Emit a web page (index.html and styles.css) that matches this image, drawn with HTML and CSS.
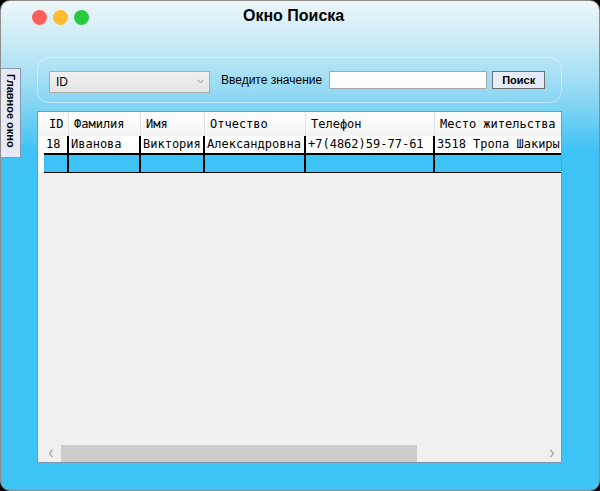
FILE: index.html
```html
<!DOCTYPE html>
<html lang="ru">
<head>
<meta charset="utf-8">
<title>Окно Поиска</title>
<link rel="stylesheet" href="styles.css">
</head>
<body>
<div class="window">
  <div class="titlebar">
    <div class="lights">
      <span class="light red"></span>
      <span class="light yellow"></span>
      <span class="light green"></span>
    </div>
    <div class="title">Окно Поиска</div>
  </div>
  <div class="content">
    <div class="sidetab"><span>Главное окно</span></div>
    <div class="main">
      <div class="searchpanel">
        <div class="combo">
          <span>ID</span>
          <svg class="chev" width="7" height="5" viewBox="0 0 7 5"><path d="M0.5 0.8 L3.5 3.8 L6.5 0.8" fill="none" stroke="#8a8a8a" stroke-width="1"/></svg>
        </div>
        <span class="label">Введите значение</span>
        <div class="input"></div>
        <div class="button">Поиск</div>
      </div>
      <div class="grid">
        <div class="rows">
          <div class="row head">
            <div class="rh"></div>
            <div class="c c1 num">ID</div>
            <div class="c c2">Фамилия</div>
            <div class="c c3">Имя</div>
            <div class="c c4">Отчество</div>
            <div class="c c5">Телефон</div>
            <div class="c c6">Место жительства</div>
          </div>
          <div class="row data">
            <div class="rh"></div>
            <div class="c c1 num">18</div>
            <div class="c c2">Иванова</div>
            <div class="c c3">Виктория</div>
            <div class="c c4">Александровна</div>
            <div class="c c5">+7(4862)59-77-61</div>
            <div class="c c6">3518 Тропа Шакиры</div>
          </div>
          <div class="row data sel">
            <div class="rh"></div>
            <div class="c c1"></div>
            <div class="c c2"></div>
            <div class="c c3"></div>
            <div class="c c4"></div>
            <div class="c c5"></div>
            <div class="c c6"></div>
          </div>
        </div>
        <div class="hscroll">
          <svg class="arrow" width="6" height="9" viewBox="0 0 6 9"><path d="M4.5 0.8 L1.5 4.5 L4.5 8.2" fill="none" stroke="#a0a0a0" stroke-width="1.2"/></svg>
          <div class="track"><div class="thumb"></div></div>
          <svg class="arrow" width="6" height="9" viewBox="0 0 6 9"><path d="M1.5 0.8 L4.5 4.5 L1.5 8.2" fill="none" stroke="#a0a0a0" stroke-width="1.2"/></svg>
        </div>
      </div>
    </div>
  </div>
</div>
</body>
</html>
```

FILE: styles.css
```css
html, body {
  margin: 0;
  padding: 0;
  background: #000;
}
body {
  width: 600px;
  height: 491px;
  overflow: hidden;
  font-family: "Liberation Sans", Arial, sans-serif;
}
.window {
  box-sizing: border-box;
  width: 600px;
  height: 491px;
  border: 1px solid #8c8c8c;
  border-radius: 10px;
  overflow: hidden;
  background: linear-gradient(to bottom, #edf6f9 0px, #c6e9f5 45px, #8fd8f3 95px, #3fc3f6 150px, #3ec3f6 100%);
  display: flex;
  flex-direction: column;
}
.titlebar {
  height: 35px;
  display: flex;
  align-items: flex-start;
  padding-left: 31px;
  box-sizing: border-box;
}
.lights {
  display: flex;
  gap: 6px;
  margin-top: 9px;
}
.light {
  width: 15px;
  height: 15px;
  border-radius: 50%;
  display: block;
}
.red { background: #fe5f57; }
.yellow { background: #febc2e; }
.green { background: #28c840; }
.title {
  margin-left: 154px;
  margin-top: 6px;
  font-weight: bold;
  font-size: 16px;
  color: #000;
}
.content {
  flex: 1;
  display: flex;
  align-items: flex-start;
  padding-top: 21px;
}
.sidetab {
  box-sizing: border-box;
  width: 20px;
  height: 90px;
  margin-top: 11px;
  background: #e6eaf7;
  border: 1px solid #8a98ac;
  border-left: none;
  display: flex;
  justify-content: center;
  padding-top: 5px;
}
.sidetab span {
  writing-mode: vertical-rl;
  font-size: 11px;
  font-weight: bold;
  color: #000;
  line-height: 16px;
}
.main {
  margin-left: 16px;
  width: 525px;
  display: flex;
  flex-direction: column;
  gap: 8px;
}
.searchpanel {
  box-sizing: border-box;
  height: 46px;
  border: 1px solid rgba(255, 255, 255, 0.45);
  border-radius: 12px;
  display: flex;
  align-items: flex-start;
  padding: 13px 0 0 11px;
}
.combo {
  box-sizing: border-box;
  width: 161px;
  height: 22px;
  border: 1px solid #acacac;
  background: linear-gradient(to bottom, #f0f0f0, #e5e5e5);
  display: flex;
  align-items: center;
  justify-content: space-between;
  padding: 0 5px 0 6px;
  font-size: 12px;
  color: #000;
}
.chev {
  display: block;
  margin-top: -2px;
}
.label {
  margin-left: 11px;
  font-size: 12px;
  line-height: 18px;
  color: #000;
}
.input {
  box-sizing: border-box;
  width: 158px;
  height: 18px;
  margin-left: 7px;
  background: #fff;
  border: 1px solid #a8a8a8;
}
.button {
  box-sizing: border-box;
  width: 53px;
  height: 18px;
  margin-left: 5px;
  background: #e7ecfb;
  border: 1px solid #707070;
  font-size: 11px;
  font-weight: bold;
  line-height: 16px;
  text-align: center;
  color: #000;
}
.grid {
  box-sizing: border-box;
  height: 352px;
  border: 1px solid #7f93b2;
  background: #f0f0f0;
  display: flex;
  flex-direction: column;
  overflow: hidden;
}
.rows {
  flex: 1;
  overflow: hidden;
  font-family: "DejaVu Sans Mono", "Liberation Mono", monospace;
  font-size: 12px;
  color: #000;
}
.row {
  display: grid;
  grid-template-columns: 6px 25px 72px 64px 101px 129px 170px;
  width: 567px;
}
.rh {
  background: #fff;
}
.head {
  height: 24px;
  background: linear-gradient(to bottom, #ffffff, #f1f2f3);
}
.head .rh {
  background: transparent;
}
.head .c {
  border-right: 1px solid #e1e3e6;
  border-bottom: 1px solid #e3e5e8;
  padding-left: 5px;
  padding-top: 1px;
  line-height: 23px;
  box-sizing: border-box;
}
.data {
  height: 19px;
}
.data .c {
  box-sizing: border-box;
  background: #fff;
  border-right: 2px solid #000;
  border-bottom: 2px solid #000;
  padding-left: 2px;
  line-height: 17px;
  white-space: nowrap;
  overflow: hidden;
}
.data .c6 {
  border-right: none;
}
.sel {
  height: 18px;
}
.sel .c {
  background: #3dc3f6;
  border-bottom: 1px solid #000;
}
.hscroll {
  height: 17px;
  display: flex;
  align-items: center;
}
.arrow {
  display: block;
  flex: none;
}
.hscroll .arrow:first-child {
  margin-left: 10px;
}
.hscroll .arrow:last-child {
  margin-right: 6px;
}
.track {
  flex: 1;
  height: 17px;
  margin: 0 6px 0 7px;
}
.thumb {
  width: 356px;
  height: 17px;
  background: #cdcdcd;
}
```
